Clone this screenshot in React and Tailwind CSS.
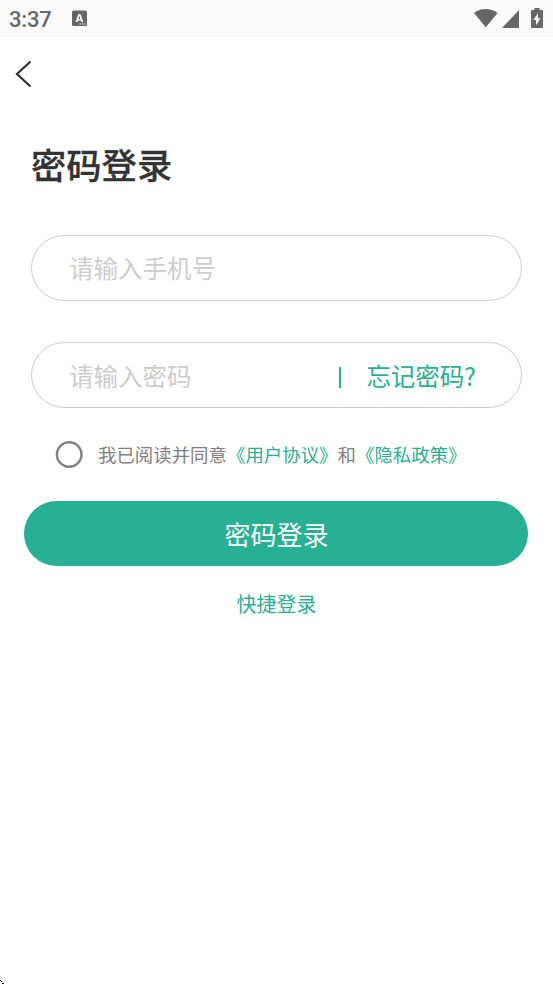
function StatusBar() {
  return (
    <header className="flex h-[37px] shrink-0 items-center bg-[#fafafa] pr-[10px] pl-[9px] text-[#666]">
      <span className="w-[63px] pt-[2px] font-[Roboto,sans-serif] text-[22px] leading-[37px] font-medium tracking-[-0.2px]">3:37</span>
      <svg width="15" height="17" viewBox="0 0 15 17" className="block" aria-hidden="true">
        <rect x="0" y="0.5" width="15" height="15.5" rx="1.5" fill="#666" />
        <path fillRule="evenodd" d="M3.500 12 6.400 4h2L11.300 12H9.400L8.900 10.500H5.900L5.400 12ZM6.400 9h2L7.400 6Z" fill="#fafafa" />
        <path d="M7.500 14h1.500M10 14h1.500M12.300 14h1.200" stroke="#fafafa" strokeWidth="1.200" />
      </svg>
      <div className="ml-auto flex items-center">
        <svg width="24" height="20" viewBox="0 0 24 20" className="mb-[2px] block" fill="#666" aria-hidden="true">
          <path d="M0 4.900C3.400 2.300 7.400 1 11.800 1s8.400 1.300 11.800 3.900L11.800 19.300Z" />
        </svg>
        <svg width="17" height="18" viewBox="0 0 17 18" className="ml-[4px] block" fill="#666" aria-hidden="true">
          <path d="M17 0v18H0Z" />
        </svg>
        <svg width="12" height="20" viewBox="0 0 12 20" className="mb-[2px] ml-[12px] block" aria-hidden="true">
          <path d="M3.500 0h5v2H11q1 0 1 1v16q0 1-1 1H1q-1 0-1-1V3q0-1 1-1h2.500Z" fill="#666" />
          <path d="M7 5v5.200h2.600L5 17.200V12H2.400Z" fill="#fafafa" />
        </svg>
      </div>
    </header>
  );
}

export default function App() {
  return (
    <div className="flex h-[984px] w-[553px] flex-col overflow-hidden bg-white font-['Noto_Sans_CJK_SC',sans-serif] text-[#333]">
      <StatusBar />
      <nav className="flex h-[74px] shrink-0 items-center pl-[15px]">
        <button aria-label="返回" className="block">
          <svg width="18" height="28" viewBox="0 0 18 28" fill="none" stroke="#333" strokeWidth="2.300" className="block">
            <path d="M15.500 1.500 2 14l13.500 12.500" />
          </svg>
        </button>
      </nav>
      <main className="flex flex-col">
        <h1 className="mt-[26px] ml-[31px] h-[55px] text-[35.300px] leading-[54px] font-medium [-webkit-text-stroke:0.3px_#333]">密码登录</h1>
        <div className="mx-[31px] mt-[43px] flex h-[66px] items-center rounded-full border border-[#ccc] pl-[37px] text-[24.500px] text-[#ccc]">
          请输入手机号
        </div>
        <div className="mx-[31px] mt-[41px] flex h-[66px] items-center rounded-full border border-[#ccc] pt-[2px] pl-[37px] text-[24.500px] text-[#ccc]">
          <span>请输入密码</span>
          <span className="mt-[2px] ml-auto h-[21px] w-[2px] bg-[#27b094]" />
          <button className="mr-[45px] ml-[25px] text-[#27b094]">忘记密码?</button>
        </div>
        <div className="mt-[32px] ml-[55px] flex h-[30px] items-center text-[18.430px] whitespace-nowrap text-[#808080]">
          <svg width="28" height="28" viewBox="0 0 28 28" className="mr-[15px] block" fill="none" aria-hidden="true">
            <circle cx="14.200" cy="13.500" r="12.300" stroke="#808080" strokeWidth="2.400" />
          </svg>
          <p>
            我已阅读并同意<span className="text-[#27b094]">《用户协议》</span>和<span className="text-[#27b094]">《隐私政策》</span>
          </p>
        </div>
        <button className="mt-[31px] mr-[25px] ml-[24px] h-[65px] rounded-full bg-[#27b094] pl-px text-[26px] leading-[65px] text-white">密码登录</button>
        <button className="mt-[23px] self-center text-[20px] leading-[30px] text-[#27b094]">快捷登录</button>
      </main>
      <svg width="4" height="4" viewBox="0 0 4 4" className="mt-auto mb-0 block" shapeRendering="crispEdges" fill="#111" aria-hidden="true">
        <path d="M0 0h1v1H0ZM1 1h1v1H1ZM2 3h2v1H2Z" />
      </svg>
    </div>
  );
}
